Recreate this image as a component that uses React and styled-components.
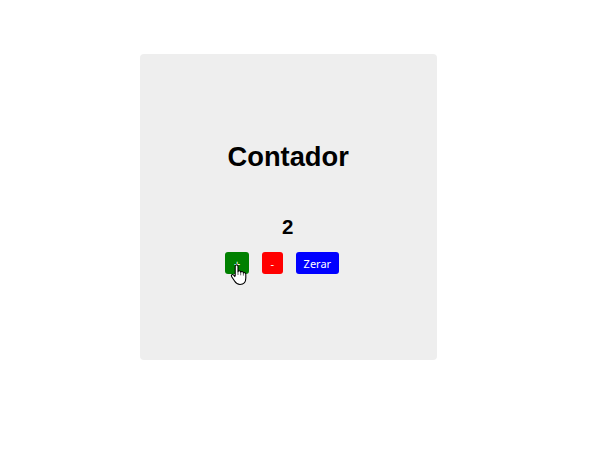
import React from "react";
import styled, { createGlobalStyle } from "styled-components";

const GlobalStyle = createGlobalStyle`
  * { box-sizing: border-box; }
  body { margin: 0; background: #fff; overflow: hidden; }
`;
const Page = styled.main`
  height: 450px;
  padding: 54px 0 0 139.7px;
`;
const Card = styled.section`
  width: 297px;
  height: 305.5px;
  padding-top: 87px;
  display: flex;
  flex-direction: column;
  align-items: center;
  background: #eee;
  border-radius: 4px;
  font-family: "Liberation Sans", Arial, sans-serif;
  color: #000;
`;
const Title = styled.h1`
  margin: 0;
  font-size: 27.3px;
  line-height: 32px;
`;
const Count = styled.h2`
  margin: 42px 1px 0 0;
  font-size: 20.5px;
  line-height: 24px;
`;
const Actions = styled.div`
  display: flex;
  gap: 12.6px;
  margin: 13px 0 0 -12.2px;
`;
const Button = styled.button`
  position: relative;
  width: ${(p) => p.$width}px;
  height: 22px;
  padding: 1px 0 0;
  border: 0;
  border-radius: 3px;
  background: ${(p) => p.$color};
  color: #fff;
  font: 11px/21px "Noto Sans", sans-serif;
  cursor: pointer;
`;
const Pointer = styled.svg`
  position: absolute;
  left: 5px;
  top: 11.5px;
  width: 17px;
  height: 22px;
`;

export default function App() {
  return (
    <>
      <GlobalStyle />
      <Page>
        <Card>
          <Title>Contador</Title>
          <Count>2</Count>
          <Actions>
            <Button $width={24} $color="#008000">
              +
              <Pointer viewBox="0 0 17 22" aria-hidden="true">
                <path
                  d="M5.2 12V2.4C5.2 .3 8 .3 8 2.4V7.7C8.2 6.4 10.6 6.5 10.7 8.2C11.2 7 13.3 7.3 13.4 9C14.1 8.1 15.8 8.6 15.8 10.2V14C15.8 18.2 13.8 20.5 10 20.5C6.6 20.5 5.6 18.7 4.4 16.8L1.7 12.7C.6 11 2.5 9.9 3.7 11.1L5.2 12.8"
                  fill="#fff" stroke="#000" strokeWidth="1.1" strokeLinejoin="round"
                />
                <path d="M8 7.7V11M10.7 8.2V11.3M13.4 9V11.6" fill="none" stroke="#222" strokeWidth="0.7" />
              </Pointer>
            </Button>
            <Button $width={21.4} $color="#ff0000">-</Button>
            <Button $width={43.5} $color="#0000ff">Zerar</Button>
          </Actions>
        </Card>
      </Page>
    </>
  );
}
